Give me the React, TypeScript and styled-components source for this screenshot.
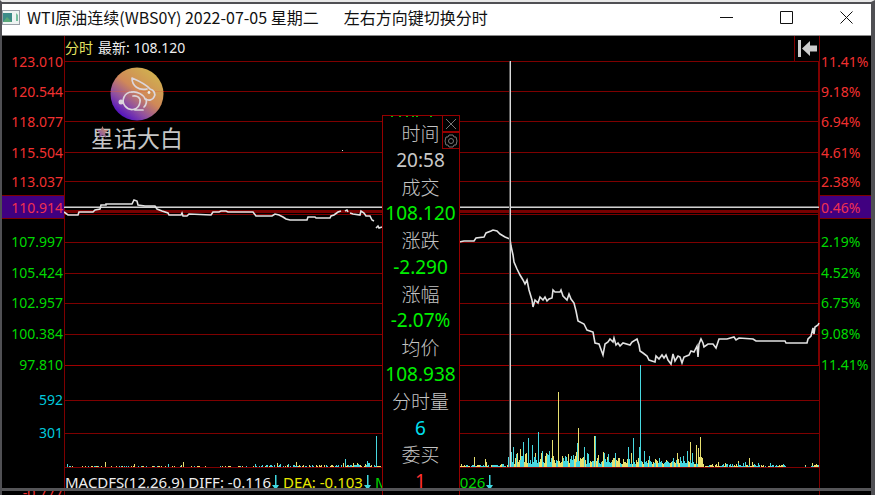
import React from "react";
import styled, { createGlobalStyle } from "styled-components";

const GlobalStyle = createGlobalStyle`
  * { box-sizing: border-box; }
  body { margin: 0; background: #000; overflow: hidden; }
  body, button { font-family: "Noto Sans", "Noto Sans CJK SC", sans-serif; }
`;

const RED = "#f03030";
const GREEN = "#00d800";
const CYAN = "#00c8dc";
const LINE = "#7e0000";

const Window = styled.main`
  position: relative;
  height: 100vh;
  overflow: hidden;
  border-top: 2px solid #e8e8e8;
  border-left: 2px solid #505054;
  border-right: 4px solid #505054;
  background: #000;
`;

const TitleBar = styled.header`
  display: flex;
  align-items: center;
  height: 34px;
  padding: 0 5px 5px 0;
  border-top: 2px solid #505054;
  border-bottom: 1px solid #8a8a8a;
  background: #fff;
  color: #111;
`;

const AppIcon = styled.svg`
  width: 18px;
  height: 15px;
  margin-right: 7px;
`;

const Title = styled.h1`
  flex: 1;
  margin: 0;
  font-family: "Noto Sans CJK SC", sans-serif;
  font-size: 16px;
  font-weight: 400;
  line-height: 24px;
  white-space: pre;
`;

const CaptionButton = styled.button`
  display: grid;
  place-items: center;
  width: 60px;
  height: 26px;
  padding: 0;
  border: 0;
  background: transparent;

  &:last-child { width: 40px; margin-left: 10px; }
`;

const Body = styled.section`
  display: grid;
  grid-template-columns: 62px 1fr 51px;
`;

const Axis = styled.ol<{ $side: "left" | "right" }>`
  display: grid;
  grid-template-rows: 30px 30px 31px 29px 25px 35px 31px 30px 31px 31px 35px 33px 60px 24px;
  margin: 0;
  padding: 14px 0 0;
  list-style: none;
  font-size: 14px;
  line-height: 24px;
  text-align: ${(p) => p.$side === "left" ? "right" : "left"};
`;

const AxisLabel = styled.li<{ $color: string; $active?: boolean }>`
  height: 24px;
  padding: 0 1px;
  color: ${(p) => p.$color};
  ${(p) => p.$active && `
    background: #400080;
    box-shadow: inset 0 1px ${LINE}, inset 0 -1px ${LINE};
    line-height: 26px;
  `}
`;

const Plot = styled.div`
  position: relative;
  display: grid;
  height: 459px;
  > * { grid-area: 1 / 1; }
`;

const ChartSvg = styled.svg`
  display: block;
  width: 100%;
  height: 459px;
`;

const Readouts = styled.div`
  display: flex;
  flex-direction: column;
  justify-content: space-between;
  min-width: 0;
  padding-bottom: 1px;
`;

const Readout = styled.div`
  display: flex;
  gap: 5px;
  padding-left: 1px;
  color: #eee;
  font-size: 14px;
  line-height: 24px;
  white-space: nowrap;
`;

const StatusRow = styled(Readout)`
  gap: 4px;
  font-size: 15px;
`;

const Tint = styled.span<{ $color: string }>`
  color: ${(p) => p.$color};
`;

const FallMark = styled.svg`
  width: 7px;
  height: 15px;
  margin-left: 1px;
  vertical-align: -2px;
  fill: #40d8e0;
`;

const BackButton = styled.button`
  position: absolute;
  top: 0;
  right: 0;
  display: grid;
  place-items: center;
  width: 26px;
  height: 26px;
  padding: 0;
  border: 1px solid ${LINE};
  border-top: 0;
  background: #000;
`;

const Brand = styled.div`
  position: absolute;
  top: 31px;
  left: 27px;
  display: flex;
  flex-direction: column;
  align-items: center;
  color: #c6c6c6;
  font-size: 23px;
  line-height: 34px;
`;

const BrandStar = styled.svg`
  position: absolute;
  top: 59px;
  left: 5px;
`;

const Inspector = styled.aside`
  position: absolute;
  top: 79px;
  bottom: 0;
  left: 42%;
  display: flex;
  width: 78px;
  padding-top: 4px;
  border: 1px solid #960000;
  border-bottom: 0;
  background: #000;
`;

const PreviousValue = styled.svg`
  position: absolute;
  top: 0;
  left: 8px;
  fill: #00c800;
`;

const Details = styled.dl`
  display: flex;
  flex: 1;
  flex-direction: column;
  align-items: center;
  margin: 0;
  font-size: 19px;
  line-height: 26px;
`;

const Term = styled.dt`
  flex: 1 1 0;
  color: #c4c4c4;
  font-family: "Noto Sans CJK SC", sans-serif;
  font-weight: 300;
`;

const Value = styled.dd<{ $color: string }>`
  flex: 1 1 0;
  margin: 0;
  color: ${(p) => p.$color};
`;

const ToolStack = styled.div`
  position: absolute;
  top: -1px;
  right: -1px;
  display: flex;
  flex-direction: column;
`;

const ToolButton = styled.button`
  display: grid;
  place-items: center;
  width: 18px;
  height: 17px;
  padding: 0;
  border: 1px solid #960000;
  background: #000;
`;

const FrameEdge = styled.div`
  position: absolute;
  right: 0;
  bottom: 4px;
  left: 0;
  height: 3px;
  background: #555558;
`;

type Label = [string, string];

const prices: Label[] = [
  ["123.010", RED], ["120.544", RED], ["118.077", RED], ["115.504", RED], ["113.037", RED],
  ["110.914", "#f03050"], ["107.997", GREEN], ["105.424", GREEN], ["102.957", GREEN],
  ["100.384", GREEN], ["97.810", GREEN], ["592", CYAN], ["301", CYAN], ["-0.777", RED],
];

const percents: Label[] = [
  ["11.41%", RED], ["9.18%", RED], ["6.94%", RED], ["4.61%", RED], ["2.38%", RED],
  ["0.46%", "#f03050"], ["2.19%", GREEN], ["4.52%", GREEN], ["6.75%", GREEN],
  ["9.08%", GREEN], ["11.41%", GREEN],
];

const details: [string, string, string][] = [
  ["时间", "20:58", "#c8c8c8"],
  ["成交", "108.120", "#00f000"],
  ["涨跌", "-2.290", "#00f000"],
  ["涨幅", "-2.07%", "#00f000"],
  ["均价", "108.938", "#00f000"],
  ["分时量", "6", "#00e0f0"],
  ["委买", "1", "#ff3030"],
];

const gridLines = [61, 91, 121, 152, 181, 214, 242, 273, 303, 334, 365, 400, 433, 467];

const priceRuns = [
  "64,212 68,215 78,215 79,212 93,212 95,210 100,209 101,205 106,205 106,204 132,204 134,200 137,201 138,205 145,206 155,206 157,209 162,211 168,213 169,215 181,215 182,213 183,216 187,216 189,214 211,215 213,212 219,212 221,211 226,211 228,212 253,212 256,216 272,216 275,214 279,215 283,217 286,219 290,220 307,220 308,217 315,217 316,218 330,218 331,216 334,215 338,212 341,211",
  "345,211 347,210 348,212", "350,213 353,214 360,215 361,211 364,213 366,216 370,216 372,220 374,221",
  "376,228 378,226 379,228 382,227",
  "459,242 464,241 474,241 476,238 484,237 486,233 491,231 493,230 497,231 500,234 505,237 510,239 511,246 513,255 514,262 517,269 520,275 523,280 525,284 527,280 529,290 532,300 533,307 535,300 538,303 540,297 543,300 545,297 547,301 549,299 552,298 553,290 555,292 560,292 561,290 563,296 567,300 569,294 571,299 574,303 576,311 578,321 584,324 587,330 593,332 595,343 599,344 603,355 605,344 608,342 610,339 613,342 614,338 616,345 618,343 620,346 623,343 630,345 632,342 637,339 639,345 640,351 643,353 647,356 649,360 655,362 656,356 659,359 662,355 664,358 666,355 668,360 671,364 673,354 675,361 678,356 680,357 682,363 684,357 689,355 691,351 694,352 697,346 698,357 699,344 701,339 703,343 704,347 708,344 713,344 716,348 719,339 727,339 734,337 736,340 739,338 753,339 756,341 785,341 786,343 807,343 808,339 811,336 813,328 814,334 815,327 818,325 819,323",
];

const spikes: [number, number, "c" | "y"][] = [
  [67, 3, "c"], [105, 5, "y"], [134, 3, "y"], [168, 3, "c"], [181, 2, "y"], [183, 5, "y"],
  [255, 3, "c"], [277, 4, "y"], [280, 3, "c"], [288, 3, "c"], [296, 5, "y"], [345, 8, "c"],
  [357, 4, "y"], [367, 6, "c"], [369, 4, "c"], [376, 31, "c"], [474, 10, "y"], [485, 8, "y"], [486, 5, "y"],
  [508, 10, "c"], [511, 15, "c"], [513, 20, "c"], [516, 13, "c"], [520, 18, "y"], [523, 25, "c"], [525, 13, "y"],
  [528, 29, "c"], [532, 22, "c"], [535, 14, "y"], [538, 35, "c"], [542, 16, "c"], [547, 13, "c"], [549, 16, "c"],
  [552, 27, "y"], [558, 75, "y"], [563, 9, "c"], [568, 13, "y"], [573, 12, "c"], [576, 15, "y"],
  [577, 24, "c"], [578, 39, "y"], [584, 20, "c"], [588, 13, "c"], [594, 31, "y"], [595, 31, "c"],
  [598, 12, "y"], [603, 15, "y"], [604, 14, "c"], [607, 10, "y"], [615, 14, "c"], [619, 9, "y"],
  [628, 20, "c"], [631, 14, "y"], [633, 29, "c"], [639, 20, "c"], [640, 102, "c"], [644, 16, "c"],
  [649, 11, "c"], [655, 8, "y"], [659, 9, "c"], [666, 7, "y"], [673, 9, "c"], [677, 14, "y"], [683, 11, "c"],
  [687, 16, "c"], [690, 25, "y"], [692, 14, "c"], [696, 22, "y"], [698, 19, "y"], [700, 30, "y"],
  [702, 9, "y"], [718, 5, "y"], [730, 3, "c"], [738, 6, "y"], [745, 5, "c"], [749, 9, "y"], [752, 5, "y"],
  [758, 4, "c"], [770, 4, "c"], [783, 3, "c"], [805, 2, "y"], [812, 4, "y"], [816, 3, "y"],
];

const levels: [number, number, number, number][] = [
  [66, 260, 1, 0.35], [260, 340, 2, 0.6], [340, 382, 4, 0.8], [459, 508, 3, 0.85],
  [508, 610, 14, 1], [610, 645, 9, 1], [645, 676, 7, 1], [676, 703, 12, 1],
  [703, 756, 4, 0.9], [756, 786, 2, 0.7], [805, 819, 2, 0.7],
];

const noise = (n: number) => {
  const value = Math.sin(n * 127.1) * 43758.5453;
  return value - Math.floor(value);
};

const baseBars = levels.flatMap(([from, to, peak, density]) => {
  const bars: [number, number, "c" | "y"][] = [];
  for (let x = from; x < to; x += 1) {
    if (noise(x) < density) {
      const height = 1 + Math.round(noise(x + 900) * noise(x + 500) * peak);
      bars.push([x, Math.min(height + (peak > 6 ? 2 : 0), peak), noise(Math.floor(x / 2) + 40) > 0.5 ? "c" : "y"]);
    }
  }
  return bars;
});

const barPath = (tone: "c" | "y") =>
  [...baseBars, ...spikes].filter((bar) => bar[2] === tone)
    .map(([x, h]) => `M${x} 467h1v-${h}h-1z`).join("");

function Chart() {
  return (
    <ChartSvg viewBox="64 36 756 459" preserveAspectRatio="none" role="img" aria-label="分时走势" shapeRendering="crispEdges">
      {gridLines.map((y) => <rect key={y} x="64" y={y} width="756" height="1" fill={LINE} />)}
      <rect x="64" y="210" width="756" height="3" fill="#780000" />
      <rect x="64" y="365" width="756" height="1" fill="#a00000" />
      <rect x="64" y="36" width="1" height="459" fill={LINE} />
      <rect x="819" y="36" width="1" height="459" fill={LINE} />
      <rect x="818" y="61" width="2" height="304" fill={LINE} />
      <path d={barPath("y")} fill="#e8e070" />
      <path d={barPath("c")} fill="#48d8e0" />
      <rect x="64" y="207" width="755" height="1" fill="#d0d0d0" />
      <rect x="64" y="206" width="755" height="1" fill="#707070" />
      {priceRuns.map((points) => (
        <polyline key={points} points={points} fill="none" stroke="#e2e2e2" strokeWidth="1.6" shapeRendering="auto" />
      ))}
      <rect x="342" y="150" width="1" height="1" fill="#ddd" />
      <rect x="510" y="61" width="1" height="406" fill="#d8d8d8" />
      <rect x="509" y="61" width="1" height="406" fill="#606060" />
    </ChartSvg>
  );
}

function BrandMark() {
  return (
    <Brand>
      <svg width="54" height="54" viewBox="0 0 54 54" aria-hidden="true">
        <defs>
          <linearGradient id="moon" x1="0.15" y1="0.9" x2="0.75" y2="0.1">
            <stop offset="0" stopColor="#4c0cc4" />
            <stop offset="0.28" stopColor="#9050a0" />
            <stop offset="0.58" stopColor="#d08858" />
            <stop offset="1" stopColor="#d0ac50" />
          </linearGradient>
        </defs>
        <circle cx="27" cy="27" r="26.5" fill="url(#moon)" />
        <path d="M0 24.5h54" stroke="#e06040" strokeOpacity=".35" />
        <g fill="none" stroke="#dcd6dc" strokeWidth="1.7" strokeLinecap="round" strokeLinejoin="round">
          <path d="M37 22C29 24 22 19 22 11c7 3 14 6 18 11 4 1 6 5 4 8-1 3-5 4-9 2-1-4-8-8-13-7" />
          <path d="M22 25C14 25 11 34 15 39c5 6 14 4 15-4 1-4-3-7-7-6M25 43h8M36 32c1 3 0 6-2 8" />
        </g>
        <circle cx="11" cy="35" r="2.5" fill="#dcd6dc" />
        <circle cx="39" cy="25.500" r="1.400" fill="#eee" />
      </svg>
      <span>星话大白</span>
      <BrandStar width="13" height="12" viewBox="0 0 12 12" aria-hidden="true">
        <defs>
          <linearGradient id="star" x1="0" y1="1" x2="1" y2="0">
            <stop offset="0" stopColor="#6a3cc0" />
            <stop offset="1" stopColor="#e0a050" />
          </linearGradient>
        </defs>
        <path d="M6 0l1.700 4H12L8.500 7l1.300 5L6 9l-3.800 3 1.300-5L0 4h4.300z" fill="url(#star)" />
      </BrandStar>
    </Brand>
  );
}

function Falling() {
  return (
    <FallMark viewBox="0 0 7 15" role="img" aria-label="下降">
      <path d="M3 0h1.500v10H7L3.750 15 0 10h3z" />
    </FallMark>
  );
}

export default function App() {
  return (
    <>
      <GlobalStyle />
      <Window>
        <TitleBar>
          <AppIcon viewBox="0 0 18 15" aria-hidden="true">
            <rect x=".5" y=".5" width="17" height="14" fill="#eef4f2" stroke="#9aa0a8" />
            <rect x="1" y="3" width="9" height="9" fill="#3c8c88" />
            <path d="M1 12l4-5 5 5z" fill="#58a878" />
            <path d="M14 3l2 2v6h-2z" fill="#78c0a0" />
          </AppIcon>
          <Title>{"WTI原油连续(WBS0Y) 2022-07-05 星期二       左右方向键切换分时"}</Title>
          <CaptionButton aria-label="最小化">
            <svg width="13" height="13" stroke="#111"><path d="M0 6.500h13" /></svg>
          </CaptionButton>
          <CaptionButton aria-label="最大化">
            <svg width="13" height="13" stroke="#111" fill="none"><path d="M.5 .5h12v12h-12z" /></svg>
          </CaptionButton>
          <CaptionButton aria-label="关闭">
            <svg width="13" height="13" stroke="#111"><path d="M.5 .5l12 12m0-12l-12 12" /></svg>
          </CaptionButton>
        </TitleBar>
        <Body>
          <Axis $side="left">
            {prices.map(([text, color], i) => (
              <AxisLabel key={text} $color={color} $active={i === 5}>{text}</AxisLabel>
            ))}
          </Axis>
          <Plot>
            <Chart />
            <Readouts>
              <Readout><Tint $color="#e4e460">分时</Tint><span>最新: 108.120</span></Readout>
              <StatusRow>
                <span>MACDFS(12,26,9)</span>
                <span>DIFF: -0.116<Falling /></span>
                <Tint $color="#e8e800">DEA: -0.103<Falling /></Tint>
                <Tint $color={GREEN}>MACDFS: -0.026<Falling /></Tint>
              </StatusRow>
            </Readouts>
            <BrandMark />
            <BackButton aria-label="返回">
              <svg width="19" height="17" viewBox="0 0 19 17" fill="#ccc">
                <path d="M0 0h3v17H0zM4 8.500L12 1v4.500h7v6h-7V16z" />
              </svg>
            </BackButton>
            <Inspector>
              <PreviousValue width="66" height="1" aria-hidden="true">
                <path d="M0 0h2v1H0zM8 0h2v1H8zM15 0h2v1h-2zM21 0h2v1h-2zM25 0h2v1h-2zM39 0h2v1h-2z" />
              </PreviousValue>
              <Details>
                {details.map(([term, value, color]) => (
                  <React.Fragment key={term}>
                    <Term>{term}</Term>
                    <Value $color={color}>{value}</Value>
                  </React.Fragment>
                ))}
              </Details>
              <ToolStack>
                <ToolButton aria-label="关闭面板">
                  <svg width="12" height="12" stroke="#777"><path d="M1 1l10 10m0-10L1 11" /></svg>
                </ToolButton>
                <ToolButton aria-label="设置">
                  <svg width="14" height="14" viewBox="0 0 14 14" fill="none" stroke="#777">
                    <path d="M5 1h4l1 2 2 0 1 4-1 4-2 0-1 2H5l-1-2-2 0-1-4 1-4 2 0z" />
                    <circle cx="7" cy="7" r="2.500" />
                  </svg>
                </ToolButton>
              </ToolStack>
            </Inspector>
          </Plot>
          <Axis $side="right">
            {percents.map(([text, color], i) => (
              <AxisLabel key={i} $color={color} $active={i === 5}>{text}</AxisLabel>
            ))}
          </Axis>
        </Body>
        <FrameEdge />
      </Window>
    </>
  );
}
